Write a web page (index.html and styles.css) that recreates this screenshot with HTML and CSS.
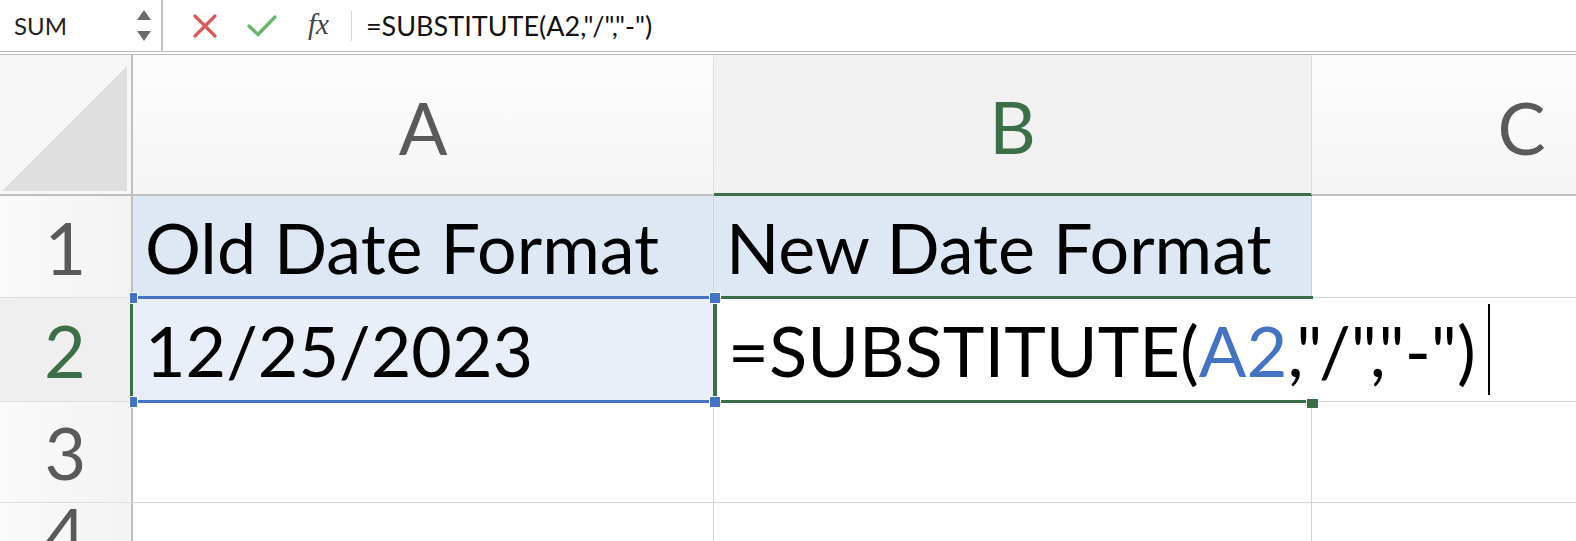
FILE: index.html
```html
<!DOCTYPE html>
<html>
<head>
<meta charset="utf-8">
<link rel="stylesheet" href="styles.css">
</head>
<body>
<div class="fbar">
  <div class="namebox">
    <span class="name">SUM</span>
    <div class="spin">
      <svg width="16" height="34" viewBox="0 0 16 34"><polygon points="8,1 15,11 1,11" fill="#6b6b6b"/><polygon points="1,22 15,22 8,32" fill="#6b6b6b"/></svg>
    </div>
  </div>
  <div class="tools">
    <svg class="ico" width="26" height="26" viewBox="0 0 26 26"><path d="M3 3 L23 23 M23 3 L3 23" stroke="#d65b5b" stroke-width="3.2" stroke-linecap="round"/></svg>
    <svg class="ico" width="32" height="26" viewBox="0 0 32 26"><path d="M3 13 L12 21.5 L29 4" stroke="#6bb46b" stroke-width="3.4" fill="none" stroke-linecap="round" stroke-linejoin="round"/></svg>
    <span class="fx">fx</span>
  </div>
  <div class="sep"></div>
  <div class="formula">=SUBSTITUTE(A2,"/","-")</div>
</div>
<div class="sheet">
  <div class="corner"><svg width="131" height="139" viewBox="0 0 131 139"><polygon points="2,136 127,11 127,136" fill="#dedede"/></svg></div>
  <div class="ch">A</div>
  <div class="ch sel">B</div>
  <div class="ch">C</div>

  <div class="rh">1</div>
  <div class="cell fill">Old Date Format</div>
  <div class="cell fill">New Date Format</div>
  <div class="cell"></div>

  <div class="rh rsel">2</div>
  <div class="cell ref">12/25/2023</div>
  <div class="cell edit"><span>=SUBSTITUTE(</span><span class="blue">A2</span><span>,"/","-")</span><span class="caret"></span></div>
  <div class="cell"></div>

  <div class="rh">3</div>
  <div class="cell"></div>
  <div class="cell"></div>
  <div class="cell"></div>

  <div class="rh">4</div>
  <div class="cell"></div>
  <div class="cell"></div>
  <div class="cell"></div>

  <div class="box-ref"></div>
  <div class="box-edit"></div>
  <div class="hdl h1"></div>
  <div class="hdl h2"></div>
  <div class="hdl h3"></div>
  <div class="hdl h4"></div>
  <div class="ghdl"></div>
</div>
</body>
</html>
```

FILE: styles.css
```css
* { box-sizing: border-box; }
html, body { margin: 0; padding: 0; background: #fff; overflow: hidden; }
body { width: 1576px; height: 541px; font-family: Lato, "Open Sans", sans-serif; }

.fbar {
  height: 55px;
  display: flex;
  align-items: center;
  border-bottom: 4px double #bcbcbc;
  background: #fff;
}
.namebox {
  width: 163px;
  height: 51px;
  border-right: 2px solid #c4c4c4;
  display: flex;
  align-items: center;
  justify-content: space-between;
  padding: 0 9px 0 14px;
}
.name { font-size: 24px; color: #222; }
.spin { display: flex; align-items: center; }
.tools {
  display: flex;
  align-items: center;
  padding-left: 29px;
}
.tools .ico:first-child { margin-right: 28px; }
.tools .ico:nth-child(2) { margin-right: 30px; }
.fx {
  font-family: "Liberation Serif", serif;
  font-style: italic;
  font-size: 29px;
  color: #444;
  margin-top: -2px;
}
.sep { width: 1px; height: 30px; background: #d6d6d6; margin-left: 22px; }
.formula { font-size: 27px; color: #111; padding-left: 14px; }

.sheet {
  position: relative;
  width: 1576px;
  height: 486px;
  overflow: hidden;
  display: grid;
  grid-template-columns: 133px 581px 598px 420px;
  grid-template-rows: 141px 102px 104px 101px 60px;
}
.corner {
  background: #f7f7f7;
  border-right: 2px solid #bfbfbf;
  border-bottom: 2px solid #bfbfbf;
}
.corner svg { display: block; }
.ch {
  background: linear-gradient(#fdfdfd, #f5f5f5);
  border-right: 1px solid #dedede;
  border-bottom: 2px solid #bfbfbf;
  display: flex;
  align-items: center;
  justify-content: center;
  font-size: 72px;
  color: #5a5a5a;
  padding-top: 4px;
}
.ch.sel {
  background: #f1f1f1;
  border-bottom: 3px solid #3c6e47;
  color: #3c6e47;
}
.rh {
  background: linear-gradient(90deg, #fafafa, #f3f3f3);
  border-right: 2px solid #bfbfbf;
  border-bottom: 1px solid #dedede;
  display: flex;
  align-items: center;
  justify-content: center;
  font-size: 72px;
  color: #5a5a5a;
}
.rh.rsel {
  background: #efefef;
  color: #3c6e47;
  border-right: 3px solid #3c6e47;
}
.cell {
  border-right: 1px solid #d4d4d4;
  border-bottom: 1px solid #d4d4d4;
  display: flex;
  align-items: center;
  padding-left: 12px;
  font-size: 70px;
  color: #000;
  white-space: nowrap;
}
.cell > span { flex-shrink: 0; }
.cell.fill { background: #dee8f5; }
.cell.ref { background: #e9eff8; }
.cell.edit { background: #fff; position: relative; z-index: 2; overflow: visible; padding-left: 14px; border-right: none; font-size: 70.5px; }
.blue { color: #4472c4; }
.caret { display: inline-block; width: 2px; height: 91px; background: #000; margin-left: 12px; }

.box-ref {
  position: absolute;
  left: 133px; top: 241px;
  width: 582px; height: 107px;
  border-top: 3px solid #4472c4;
  border-bottom: 3px solid #4472c4;
  z-index: 3;
}
.box-edit {
  position: absolute;
  left: 713px; top: 241px;
  width: 600px; height: 107px;
  border-top: 3px solid #3c6e47;
  border-bottom: 3px solid #3c6e47;
  border-left: 4px solid #3c6e47;
  z-index: 3;
}
.hdl {
  position: absolute;
  width: 12px; height: 12px;
  background: #4472c4;
  border: 1px solid #fff;
  z-index: 4;
}
.h1 { left: 129px; top: 237px; width: 9px; }
.h2 { left: 129px; top: 341px; width: 9px; }
.h3 { left: 709px; top: 237px; }
.h4 { left: 709px; top: 341px; }
.ghdl {
  position: absolute;
  left: 1306px; top: 343px;
  width: 12px; height: 10px;
  background: #3c6e47;
  border-left: 1px solid #fff;
  border-top: 1px solid #fff;
  z-index: 4;
}
```
